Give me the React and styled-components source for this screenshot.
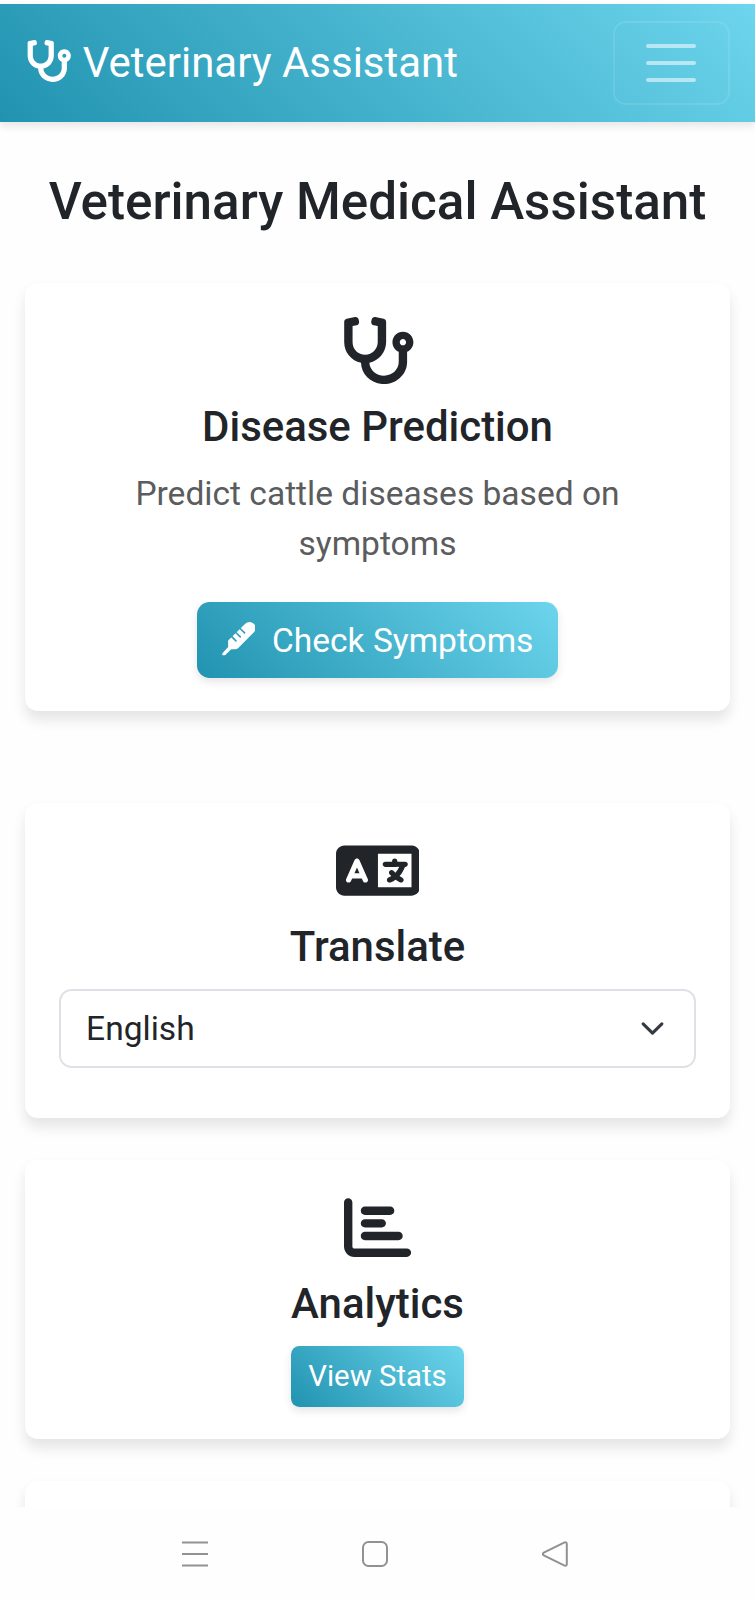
import React, { useState } from 'react';
import styled, { createGlobalStyle } from 'styled-components';
import { FaLanguage, FaChartBar } from 'react-icons/fa6';

const GlobalStyle = createGlobalStyle`
    * {
        box-sizing: border-box;
    }
    body {
        margin: 0;
        background: #fefefe;
        color: #212529;
        font-family: Roboto, "Liberation Sans", sans-serif;
        font-size: 33.55px;
        line-height: 1.5;
    }
`

// heavier than the stethoscope in react-icons
function Stethoscope() {
    return (
        <svg viewBox="0 0 576 512" fill="currentColor">
            <path d="M480 112c-44.18 0-80 35.82-80 80c0 32.84 19.81 60.98 48.11 73.31v78.7c0 57.25-50.25 104-112 104c-60 0-109.3-44.1-111.9-99.23C296.1 333.8 352 269.3 352 191.1V36.59c0-11.38-8.15-21.38-19.28-23.5L269.8.4775c-13-2.625-25.54 5.766-28.16 18.77L238.4 34.99c-2.625 13 5.812 25.59 18.81 28.22l30.69 6.059L287.9 190.7c0 52.88-42.13 96.63-95.13 97.13c-53.38.5-96.81-42.56-96.81-95.93L95.89 69.37l30.72-6.112c13-2.5 21.41-15.15 18.78-28.15L142.3 19.37c-2.5-13-15.15-21.41-28.15-18.78L51.28 12.99C40.15 15.24 32 25.09 32 36.59v155.4c0 77.25 55.11 142 128.1 156.8C162.7 439.3 240.6 512 336 512c97 0 176-75.37 176-168V265.3c28.23-12.36 48-40.46 48-73.25C560 147.8 524.2 112 480 112zM480 216c-13.25 0-24-10.75-24-24S466.7 168 480 168S504 178.7 504 192S493.3 216 480 216z"/>
        </svg>
    )
}

function Thermometer() {
    return (
        <svg viewBox="0 0 101 101" fill="currentColor">
            <mask id="scale-marks">
                <rect width="101" height="101" fill="white"/>
                <path d="m27 42 15 15M40 30l15 15M53 18l15 15" stroke="black" strokeWidth="5" strokeLinecap="round"/>
            </mask>
            <path mask="url(#scale-marks)" d="M18.5 56 70 5.5A18 18 0 0 1 96 31L49 78q-4 4-9 4H28L9 100q-4 2-7 0-3-3 0-7l16.5-18z"/>
        </svg>
    )
}

export default function App() {
    const [language, setLanguage] = useState('English');
    return (
        <Screen>
            <GlobalStyle/>
            <Page>
                <Navbar>
                    <Brand href="#">
                        <Stethoscope/>
                        Veterinary Assistant
                    </Brand>
                    <Toggler aria-label="Toggle navigation">
                        <TogglerBar/>
                        <TogglerBar/>
                        <TogglerBar/>
                    </Toggler>
                </Navbar>
                <Title>Veterinary Medical Assistant</Title>
                <Cards>
                    <Card $height="428px" $after="92px">
                        <CardIcon $width="75.5px"><Stethoscope/></CardIcon>
                        <CardTitle>Disease Prediction</CardTitle>
                        <CardText>Predict cattle diseases based on symptoms</CardText>
                        <Button>
                            <Thermometer/>
                            Check Symptoms
                        </Button>
                    </Card>
                    <Card $height="315px" $after="42px">
                        <CardIcon $width="83.9px"><FaLanguage/></CardIcon>
                        <CardTitle>Translate</CardTitle>
                        <SelectBox onClick={() => setLanguage('English')}>
                            {language}
                            <Chevron viewBox="0 0 16 16">
                                <path d="m2 5 6 6 6-6"/>
                            </Chevron>
                        </SelectBox>
                    </Card>
                    <Card $height="279px" $after="42px">
                        <CardIcon $width="67.1px"><FaChartBar/></CardIcon>
                        <CardTitle>Analytics</CardTitle>
                        <Button $small>View Stats</Button>
                    </Card>
                    <Card $height="279px" $after="0"/>
                </Cards>
            </Page>
            <SystemBar>
                <svg viewBox="0 0 26 26">
                    <path d="M0 1.5h26M0 13h26M0 24.5h26"/>
                </svg>
                <svg viewBox="0 0 26 26">
                    <rect x="1" y="1" width="24" height="24" rx="5.5"/>
                </svg>
                <svg viewBox="0 0 26 26">
                    <path d="M22.6 1.4 1.8 11.6q-1.8 1.4 0 2.8l20.8 10.2q2.2.6 2.2-1.6V3q0-2.2-2.2-1.6z"/>
                </svg>
            </SystemBar>
        </Screen>
    )
}

const Screen = styled.div`
    height: 1600px;
    display: flex;
    flex-direction: column;
    overflow: hidden;
`

const Page = styled.main`
    height: 1507px;
    padding-top: 4px;
    flex-shrink: 0;
    overflow: hidden;
`

const Navbar = styled.nav`
    height: 118px;
    padding: 0 25px;
    display: flex;
    align-items: center;
    justify-content: space-between;
    background: linear-gradient(45deg, #2193b0, #6dd5ed);
    box-shadow: 0 4px 8px rgba(0, 0, 0, 0.1);
`

const Brand = styled.a`
    display: flex;
    align-items: center;
    gap: 10.6px;
    color: white;
    font-size: 41.94px;
    text-decoration: none;
    white-space: nowrap;
    svg {
        width: 47.2px;
        height: 42px;
        margin-top: -4px;
    }
`

const Toggler = styled.button`
    width: 117px;
    height: 84px;
    padding: 0 2px 0 0;
    display: flex;
    flex-direction: column;
    align-items: center;
    justify-content: center;
    gap: 13px;
    background: none;
    border: 2px solid rgba(255, 255, 255, 0.1);
    border-radius: 12.6px;
`

const TogglerBar = styled.span`
    width: 50px;
    height: 4px;
    border-radius: 2px;
    background: rgba(255, 255, 255, 0.55);
`

const Title = styled.h1`
    margin: 49px 0 50.4px;
    font-size: 51.2px;
    font-weight: 500;
    line-height: 62px;
    text-align: center;
    white-space: nowrap;
`

const Cards = styled.div`
    padding: 0 25px;
`

const Card = styled.section`
    height: ${props => props.$height};
    margin-bottom: ${props => props.$after};
    padding: 33.8px 34.1px;
    display: flex;
    flex-direction: column;
    align-items: center;
    background: white;
    border-radius: 13px;
    box-shadow: 0 8.4px 12.6px rgba(0, 0, 0, 0.1);
`

const CardIcon = styled.div`
    width: ${props => props.$width};
    height: 67.1px;
    flex-shrink: 0;
    svg {
        display: block;
        width: 100%;
        height: 100%;
    }
`

const CardTitle = styled.h5`
    margin: 17.3px 0 16.9px;
    font-size: 41.94px;
    font-weight: 500;
    line-height: 1.2;
`

const CardText = styled.p`
    margin: 0 0 33px;
    color: #5a5c5e;
    text-align: center;
`

const Button = styled.button`
    height: ${props => props.$small ? '61px' : '75.5px'};
    padding: ${props => props.$small ? '0 16.8px 1px' : '0 24.8px 0 25px'};
    display: flex;
    align-items: center;
    gap: 16.6px;
    flex-shrink: 0;
    border: none;
    border-radius: ${props => props.$small ? '8.4px' : '12.6px'};
    background: linear-gradient(45deg, #2193b0, #6dd5ed);
    box-shadow: 0 4px 8px rgba(0, 0, 0, 0.1);
    color: white;
    font-family: inherit;
    font-size: ${props => props.$small ? '29.36px' : '33.55px'};
    white-space: nowrap;
    svg {
        width: 33.55px;
        height: 33.55px;
        margin-top: -2.5px;
    }
`

const SelectBox = styled.button`
    width: 100%;
    height: 79px;
    padding: 0 29px 0 25px;
    display: flex;
    align-items: center;
    justify-content: space-between;
    flex-shrink: 0;
    background: white;
    border: 2px solid #dee2e6;
    border-radius: 12.6px;
    color: #212529;
    font-family: inherit;
    font-size: 33.55px;
`

const Chevron = styled.svg`
    width: 25px;
    height: 33px;
    fill: none;
    stroke: #343a40;
    stroke-width: 2;
    stroke-linecap: round;
    stroke-linejoin: round;
`

const SystemBar = styled.footer`
    height: 93px;
    padding: 0 187px 0 181.5px;
    display: flex;
    align-items: center;
    justify-content: space-between;
    svg {
        width: 26px;
        height: 26px;
        fill: none;
        stroke: #919191;
        stroke-width: 2;
    }
`
